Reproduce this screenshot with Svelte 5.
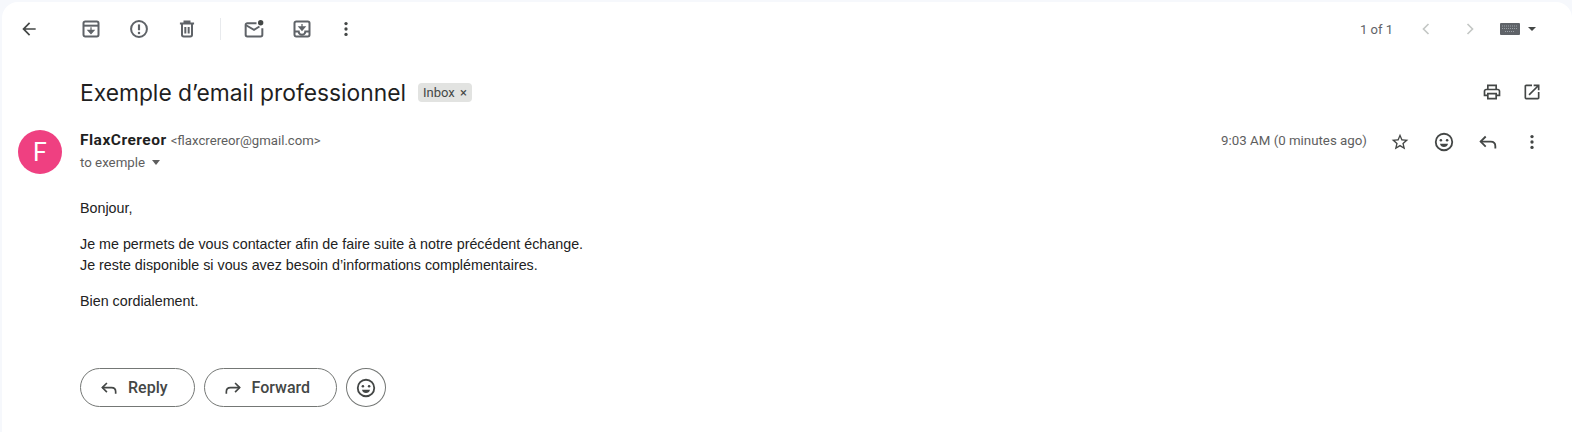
<script>
  let paragraphs = [
    ['Bonjour,'],
    [
      'Je me permets de vous contacter afin de faire suite à notre précédent échange.',
      "Je reste disponible si vous avez besoin d’informations complémentaires."
    ],
    ['Bien cordialement.']
  ];
</script>

{#snippet smile(size)}
  <svg width={size} height={size} viewBox="0 0 24 24" fill="none">
    <circle cx="12" cy="12" r="9" stroke="#444746" stroke-width="2" />
    <circle cx="8.6" cy="10" r="1.4" fill="#444746" />
    <circle cx="15.4" cy="10" r="1.4" fill="#444746" />
    <path d="M7.6 13.8h8.8c-.6 2.3-2.2 3.6-4.4 3.6s-3.800-1.300-4.400-3.600z" fill="#444746" />
  </svg>
{/snippet}

{#snippet reply(size)}
  <svg width={size} height={size} viewBox="0 0 24 24" fill="none" stroke="#444746" stroke-width="2">
    <path d="M9.500 6 4 11.500l5.500 5.500" />
    <path d="M4 11.500h11c3 0 5 2 5 5V19" />
  </svg>
{/snippet}

{#snippet dots()}
  <svg width="20" height="20" viewBox="0 0 24 24" fill="#444746">
    <circle cx="12" cy="5.500" r="2" />
    <circle cx="12" cy="12" r="2" />
    <circle cx="12" cy="18.500" r="2" />
  </svg>
{/snippet}

<div class="page">
  <div class="card">
    <div class="toolbar">
      <div class="tools">
        <button class="icon back" aria-label="Back">
          <svg width="20" height="20" viewBox="0 0 24 24" fill="#444746"><path d="M20 11H7.830l5.590-5.590L12 4l-8 8 8 8 1.410-1.410L7.830 13H20v-2z" /></svg>
        </button>
        <button class="icon" aria-label="Archive">
          <svg width="20" height="20" viewBox="0 0 24 24" fill="none" stroke="#5f6368" stroke-width="2.400">
            <rect x="3" y="3" width="18" height="18" rx="2" />
            <path d="M3 8h18" />
            <path d="M12 10v5M8.500 13.500h7L12 17.500z" fill="#5f6368" stroke-width="1.500" />
          </svg>
        </button>
        <button class="icon" aria-label="Report spam">
          <svg width="20" height="20" viewBox="0 0 24 24" fill="none" stroke="#5f6368" stroke-width="2.400">
            <circle cx="12" cy="12" r="9.500" />
            <path d="M12 6.500v7" stroke-width="2.600" />
            <circle cx="12" cy="16.800" r="1.500" fill="#5f6368" stroke="none" />
          </svg>
        </button>
        <button class="icon" aria-label="Delete">
          <svg width="20" height="20" viewBox="0 0 24 24" fill="none" stroke="#5f6368" stroke-width="2.400">
            <path d="M3.500 5.500h17M9 5.500V3h6v2.500M6 5.500V19a2 2 0 0 0 2 2h8a2 2 0 0 0 2-2V5.500" />
            <path d="M10 9.500v8M14 9.500v8" />
          </svg>
        </button>
        <span class="divider"></span>
        <button class="icon" aria-label="Mark as unread">
          <svg width="20" height="20" viewBox="0 0 24 24" fill="none" stroke="#5f6368" stroke-width="2.400">
            <path d="M15 5H4a2 2 0 0 0-2 2v12a2 2 0 0 0 2 2h16a2 2 0 0 0 2-2v-8" />
            <path d="M2.500 7.500 12 13l6.500-4" />
            <circle cx="20" cy="4.500" r="3.200" fill="#444746" stroke="none" />
          </svg>
        </button>
        <button class="icon" aria-label="Snooze">
          <svg width="20" height="20" viewBox="0 0 24 24" fill="none" stroke="#5f6368" stroke-width="2.400">
            <rect x="3" y="3" width="18" height="18" rx="2" />
            <path d="M3 15h5a4 4 0 0 0 8 0h5" />
            <path d="M12 6v5M8.500 9.500h7L12 13.500z" fill="#5f6368" stroke-width="1.500" />
          </svg>
        </button>
        <button class="icon more" aria-label="More">{@render dots()}</button>
      </div>
      <div class="pager">
        <span class="count">1 of 1</span>
        <svg class="chev" width="20" height="20" viewBox="0 0 24 24" fill="none" stroke="#c4c7c5" stroke-width="2"><path d="M15 6l-6 6 6 6" /></svg>
        <svg class="chev last" width="20" height="20" viewBox="0 0 24 24" fill="none" stroke="#c4c7c5" stroke-width="2"><path d="M9 6l6 6-6 6" /></svg>
        <span class="keyboard">
          <svg width="20" height="12" viewBox="0 0 20 12">
            <rect width="20" height="12" rx="1" fill="#5f6368" />
            <path d="M2 3h16M2 5.500h16M5 8.500h10" stroke="#9aa0a6" stroke-width="1" stroke-dasharray="1 1" />
          </svg>
          <i class="caret"></i>
        </span>
      </div>
    </div>

    <div class="subject">
      <div class="title-wrap">
        <h1>Exemple d’email professionnel</h1>
        <span class="label">Inbox <b>×</b></span>
      </div>
      <div class="subject-actions">
        <button class="icon" aria-label="Print">
          <svg width="20" height="20" viewBox="0 0 24 24" fill="#444746"><path d="M19 8h-1V3H6v5H5c-1.660 0-3 1.340-3 3v6h4v4h12v-4h4v-6c0-1.660-1.340-3-3-3zM8 5h8v3H8V5zm8 12v2H8v-4h8v2zm2-2v-2H6v2H4v-4c0-.550.450-1 1-1h14c.550 0 1 .450 1 1v4h-2z" /></svg>
        </button>
        <button class="icon" aria-label="Open in new window">
          <svg width="20" height="20" viewBox="0 0 24 24" fill="#444746"><path d="M19 19H5V5h7V3H5c-1.110 0-2 .900-2 2v14c0 1.100.890 2 2 2h14c1.100 0 2-.900 2-2v-7h-2v7zM14 3v2h3.590l-9.830 9.830 1.410 1.410L19 6.410V10h2V3h-7z" /></svg>
        </button>
      </div>
    </div>

    <div class="message">
      <div class="avatar">F</div>
      <div class="content">
        <div class="head">
          <div class="from">
            <div class="sender"><span class="name">FlaxCrereor</span> <span class="addr">&lt;flaxcrereor@gmail.com&gt;</span></div>
            <div class="to">to exemple <i class="caret small"></i></div>
          </div>
          <div class="meta">
            <span class="time">9:03 AM (0 minutes ago)</span>
            <button class="icon" aria-label="Star">
              <svg width="20" height="20" viewBox="0 0 24 24" fill="#444746"><path d="M22 9.240l-7.190-.620L12 2 9.190 8.630 2 9.240l5.460 4.730L5.820 21 12 17.270 18.180 21l-1.630-7.030L22 9.240zM12 15.400l-3.760 2.270 1-4.280-3.320-2.880 4.380-.380L12 6.100l1.710 4.040 4.380.380-3.320 2.880 1 4.280L12 15.400z" /></svg>
            </button>
            <button class="icon" aria-label="React">{@render smile(22)}</button>
            <button class="icon" aria-label="Reply">{@render reply(22)}</button>
            <button class="icon" aria-label="More">{@render dots()}</button>
          </div>
        </div>

        <div class="body">
          {#each paragraphs as lines}
            <p>
              {#each lines as line}
                <span>{line}</span>
              {/each}
            </p>
          {/each}
        </div>

        <div class="actions">
          <button class="pill">{@render reply(20)}Reply</button>
          <button class="pill">
            <svg class="flip" width="20" height="20" viewBox="0 0 24 24" fill="none" stroke="#444746" stroke-width="2">
              <path d="M9.500 6 4 11.500l5.500 5.500" />
              <path d="M4 11.500h11c3 0 5 2 5 5V19" />
            </svg>
            Forward
          </button>
          <button class="round" aria-label="React">{@render smile(22)}</button>
        </div>
      </div>
    </div>
  </div>
</div>

<style>
  :global(body) {
    font-family: 'Liberation Sans', Arial, sans-serif;
    background-color: #f6f8fc;
    color: #222;
  }

  * {
    box-sizing: border-box;
  }

  .page {
    height: 432px;
    padding: 2px 0 0 2px;
    overflow: hidden;
  }

  .card {
    height: 430px;
    background-color: #ffffff;
    border-radius: 16px 16px 0 0;
  }

  button {
    font-family: inherit;
    background: none;
    border: none;
    padding: 0;
    cursor: pointer;
  }

  .icon {
    width: 44px;
    height: 44px;
    display: flex;
    align-items: center;
    justify-content: center;
    flex: none;
  }

  /* top bar */
  .toolbar {
    height: 54px;
    display: flex;
    align-items: center;
    justify-content: space-between;
  }

  .tools {
    display: flex;
    align-items: center;
    padding-left: 5px;
    gap: 4px;
  }

  .back {
    margin-right: 14px;
  }

  .more {
    margin-left: -4px;
  }

  .divider {
    width: 1px;
    height: 22px;
    background-color: #e8eaed;
    margin: 0 7px;
  }

  .pager {
    display: flex;
    align-items: center;
    color: #5f6368;
    font-size: 13px;
    font-family: Roboto, sans-serif;
    padding-right: 36px;
  }

  .count {
    margin-right: 23px;
  }

  .chev {
    margin-right: 24px;
  }

  .chev.last {
    margin-right: 18px;
  }

  .keyboard {
    display: flex;
    align-items: center;
    gap: 8px;
    margin-left: 2px;
  }

  .caret {
    width: 0;
    height: 0;
    border-left: 4px solid transparent;
    border-right: 4px solid transparent;
    border-top: 4px solid #444746;
    display: inline-block;
  }

  /* subject */
  .subject {
    height: 44px;
    margin-top: 14px;
    display: flex;
    align-items: center;
    justify-content: space-between;
    padding: 0 20px 0 78px;
  }

  .title-wrap {
    display: flex;
    align-items: center;
    gap: 12px;
  }

  h1 {
    margin: 0;
    font-size: 22.800px;
    font-weight: 400;
    font-family: Inter, sans-serif;
    color: #1f1f1f;
  }

  .label {
    background-color: #e2e3e1;
    color: #444746;
    font-family: Roboto, sans-serif;
    font-size: 13px;
    border-radius: 4px;
    padding: 2px 5px;
    height: 19px;
    line-height: 15px;
    white-space: nowrap;
  }

  .label b {
    font-weight: 400;
    margin-left: 2px;
  }

  .subject-actions {
    display: flex;
  }

  .subject-actions .icon {
    width: 40px;
  }

  /* message */
  .message {
    display: flex;
    margin-top: 10px;
    padding-left: 16px;
  }

  .avatar {
    width: 44px;
    height: 44px;
    border-radius: 50%;
    background-color: #ef4081;
    color: #fff;
    font-family: Roboto, sans-serif;
    font-size: 25px;
    display: flex;
    align-items: center;
    justify-content: center;
    margin-top: 6px;
    flex: none;
  }

  .content {
    flex: 1;
    margin-left: 18px;
  }

  .head {
    display: flex;
    justify-content: space-between;
    height: 50px;
  }

  .from {
    padding-top: 6px;
    font-family: Roboto, sans-serif;
  }

  .name {
    font-size: 15.500px;
    font-weight: 700;
    letter-spacing: .5px;
    color: #1f1f1f;
  }

  .addr {
    font-size: 13.200px;
    color: #5e5e5e;
  }

  .to {
    font-size: 13.300px;
    color: #5e5e5e;
    margin-top: 6px;
    display: flex;
    align-items: center;
    gap: 7px;
  }

  .to .small {
    border-width: 5px 4px 0;
    border-top-color: #5e5e5e;
  }

  .meta {
    display: flex;
    align-items: flex-start;
    padding-right: 18px;
    padding-top: 6px;
    height: 44px;
  }

  .time {
    font-family: Roboto, sans-serif;
    font-size: 13.300px;
    color: #5e5e5e;
    margin-right: 11px;
    line-height: 22px;
  }

  .meta .icon {
    height: 22px;
    margin-top: 1px;
  }

  .body {
    margin-top: 24px;
    font-size: 14.300px;
    color: #222;
    line-height: 21px;
  }

  .body p {
    margin: 0 0 15px;
  }

  .body span {
    display: block;
  }

  .actions {
    display: flex;
    gap: 9px;
    margin-top: 56px;
  }

  .pill {
    height: 39px;
    border: 1px solid #747775;
    border-radius: 20px;
    display: flex;
    align-items: center;
    gap: 9px;
    padding: 0 26px 0 18px;
    font-family: Roboto, sans-serif;
    font-size: 16px;
    font-weight: 500;
    color: #444746;
  }

  .flip {
    transform: scaleX(-1);
  }

  .round {
    width: 40px;
    height: 39px;
    border: 1px solid #747775;
    border-radius: 50%;
    display: flex;
    align-items: center;
    justify-content: center;
  }
</style>
